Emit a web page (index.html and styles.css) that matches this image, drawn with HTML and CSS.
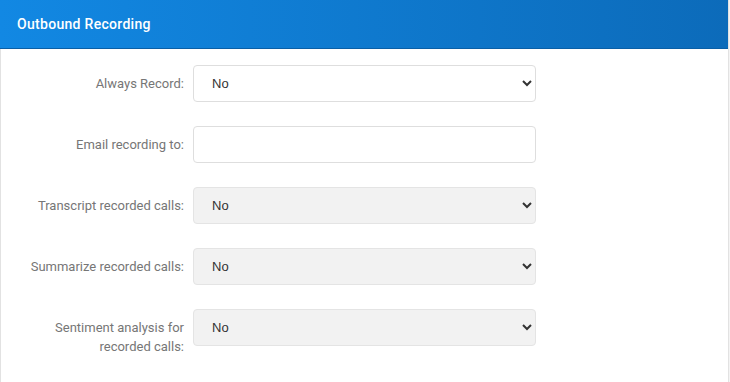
FILE: index.html
```html
<!DOCTYPE html>
<html lang="en">
<head>
    <meta charset="UTF-8">
    <title>Outbound Recording</title>
    <link rel="stylesheet" href="styles.css">
</head>
<body>

<div class="panel">
    <div class="panel-heading">Outbound Recording</div>
    <div class="panel-body">
        <div class="form-row">
            <label for="always">Always Record:</label>
            <select id="always" class="field">
                <option>No</option>
                <option>Yes</option>
            </select>
        </div>
        <div class="form-row">
            <label for="email">Email recording to:</label>
            <input type="text" id="email" class="field">
        </div>
        <div class="form-row">
            <label for="transcript">Transcript recorded calls:</label>
            <select id="transcript" class="field disabled">
                <option>No</option>
            </select>
        </div>
        <div class="form-row">
            <label for="summary">Summarize recorded calls:</label>
            <select id="summary" class="field disabled">
                <option>No</option>
            </select>
        </div>
        <div class="form-row last">
            <label for="sentiment">Sentiment analysis for recorded calls:</label>
            <select id="sentiment" class="field disabled">
                <option>No</option>
            </select>
        </div>
    </div>
</div>

</body>
</html>
```

FILE: styles.css
```css
* {
    margin: 0;
    padding: 0;
    box-sizing: border-box;
}

body {
    font-family: 'Roboto', 'Liberation Sans', sans-serif;
    background-color: #f4f4f4;
}

.panel {
    width: 729px;
    min-height: 382px;
    background: #fff;
    border-left: 1px solid #e2e2e2;
    border-right: 1px solid #e2e2e2;
}

.panel-heading {
    height: 49px;
    margin-left: -1px;
    padding: 15px 17px 0;
    background: linear-gradient(to right, #1288e3, #0c6bba);
    border-bottom: 1px solid #0a5fa6;
    color: #fff;
    font-size: 14px;
    font-weight: 500;
    letter-spacing: 0.3px;
    line-height: 18px;
}

.panel-body {
    padding-top: 16px;
}

.form-row {
    display: flex;
    align-items: flex-start;
    margin-bottom: 24px;
}

.form-row.last {
    margin-top: 1px;
}

label {
    width: 192px;
    padding: 9px 9px 0 20px;
    text-align: right;
    font-size: 13px;
    line-height: 19px;
    color: #767676;
}

.field {
    width: 343px;
    height: 37px;
    padding: 0 10px 0 14px;
    border: 1px solid #dedede;
    border-radius: 4px;
    background-color: #fff;
    font-family: 'Liberation Sans', Arial, sans-serif;
    font-size: 13px;
    color: #333;
    outline: none;
}

.field.disabled {
    background-color: #f2f2f2;
    border-color: #e4e4e4;
}
```
